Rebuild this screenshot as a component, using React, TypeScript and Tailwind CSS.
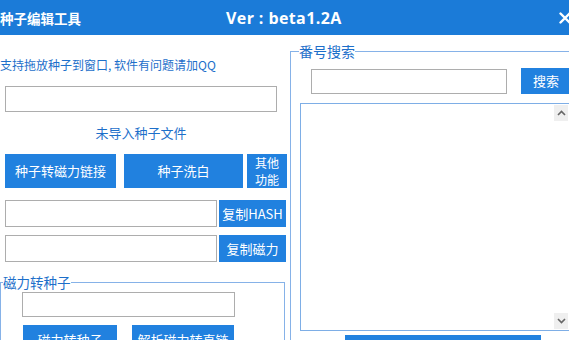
export default function App() {
  const btn = "bg-[#2181df] text-white flex items-center justify-center text-[13px] leading-[16px]";
  const inp = "border border-[#adadad] bg-white";
  return (
    <div className="w-[569px] h-[340px] overflow-hidden bg-white font-['Noto_Sans_CJK_SC',sans-serif] relative">
      <div className="h-[35px] bg-[#1b7bd8] flex items-center text-white font-bold">
        <span className="text-[13.5px] leading-[16px]">种子编辑工具</span>
        <span className="ml-[145px] text-[16px] leading-[18px] tracking-[0.4px] font-['Open_Sans',sans-serif]">Ver : beta1.2A</span>
        <svg className="ml-auto mr-[-2px]" width="12" height="12" viewBox="0 0 12 12">
          <path d="M1.5 1.5 L10.5 10.5 M10.5 1.5 L1.5 10.5" stroke="white" strokeWidth="2.4" strokeLinecap="round" />
        </svg>
      </div>
      <div className="flex items-start">
        <div className="w-[290px] shrink-0 flex flex-col">
          <div className="mt-[22px] text-[12px] leading-[16px] text-[#1d6fca] whitespace-nowrap">支持拖放种子到窗口, 软件有问题请加QQ</div>
          <div className={`mt-[13px] ml-[5px] w-[272px] h-[26px] ${inp}`} />
          <div className="mt-[13px] ml-[5px] w-[272px] text-center text-[13px] leading-[16px] text-[#1d6fca]">未导入种子文件</div>
          <div className="mt-[13px] flex h-[34px]">
            <div className={`ml-[5px] w-[111px] ${btn}`}>种子转磁力链接</div>
            <div className={`ml-[8px] w-[119px] ${btn}`}>种子洗白</div>
            <div className="ml-[4px] w-[40px] bg-[#2181df] text-white flex flex-col items-center justify-center text-[12px] leading-[17.5px]">
              <span className="block">其他</span>
              <span className="block">功能</span>
            </div>
          </div>
          <div className="mt-[12px] flex h-[27px]">
            <div className={`ml-[5px] w-[212px] ${inp}`} />
            <div className={`ml-[2px] w-[67px] ${btn}`}>复制HASH</div>
          </div>
          <div className="mt-[8px] flex h-[27px]">
            <div className={`ml-[5px] w-[212px] ${inp}`} />
            <div className={`ml-[2px] w-[67px] ${btn}`}>复制磁力</div>
          </div>
          <fieldset className="mt-[12px] w-[285px] h-[100px] border border-[#86b2e8]">
            <legend className="ml-[2px] text-[13.5px] leading-[16px] text-[#1d6fca]">磁力转种子</legend>
            <div className={`mt-[2px] ml-[21px] w-[213px] h-[25px] ${inp}`} />
            <div className="mt-[8px] flex h-[30px]">
              <div className={`ml-[22px] w-[94px] ${btn}`}>磁力转种子</div>
              <div className={`ml-[15px] w-[102px] ${btn}`}>解析磁力转直链</div>
            </div>
          </fieldset>
        </div>
        <fieldset className="mt-[8px] w-[300px] h-[340px] shrink-0 border border-[#86b2e8]">
          <legend className="ml-[8px] text-[14px] leading-[16px] text-[#1d6fca]">番号搜索</legend>
          <div className="mt-[9px] flex items-start">
            <div className={`mt-[1px] ml-[20px] w-[196px] h-[25px] ${inp}`} />
            <div className={`ml-[14px] w-[50px] h-[26px] ${btn}`}>搜索</div>
          </div>
          <div className="mt-[9px] ml-[9px] w-[270px] h-[228px] border border-[#7eaee6] relative">
            <div className="absolute right-[1px] top-[1px] w-[14px] h-[16px] bg-[#efefef] flex items-center justify-center">
              <svg width="9" height="6" viewBox="0 0 9 6">
                <path d="M1 5 L4.5 1.5 L8 5" stroke="#666" strokeWidth="1.6" fill="none" />
              </svg>
            </div>
            <div className="absolute right-[1px] bottom-[1px] w-[14px] h-[16px] bg-[#efefef] flex items-center justify-center">
              <svg width="9" height="6" viewBox="0 0 9 6">
                <path d="M1 1 L4.5 4.5 L8 1" stroke="#666" strokeWidth="1.6" fill="none" />
              </svg>
            </div>
          </div>
          <div className="mt-[4px] ml-[54px] w-[196px] h-[30px] bg-[#2181df]" />
        </fieldset>
      </div>
    </div>
  );
}
